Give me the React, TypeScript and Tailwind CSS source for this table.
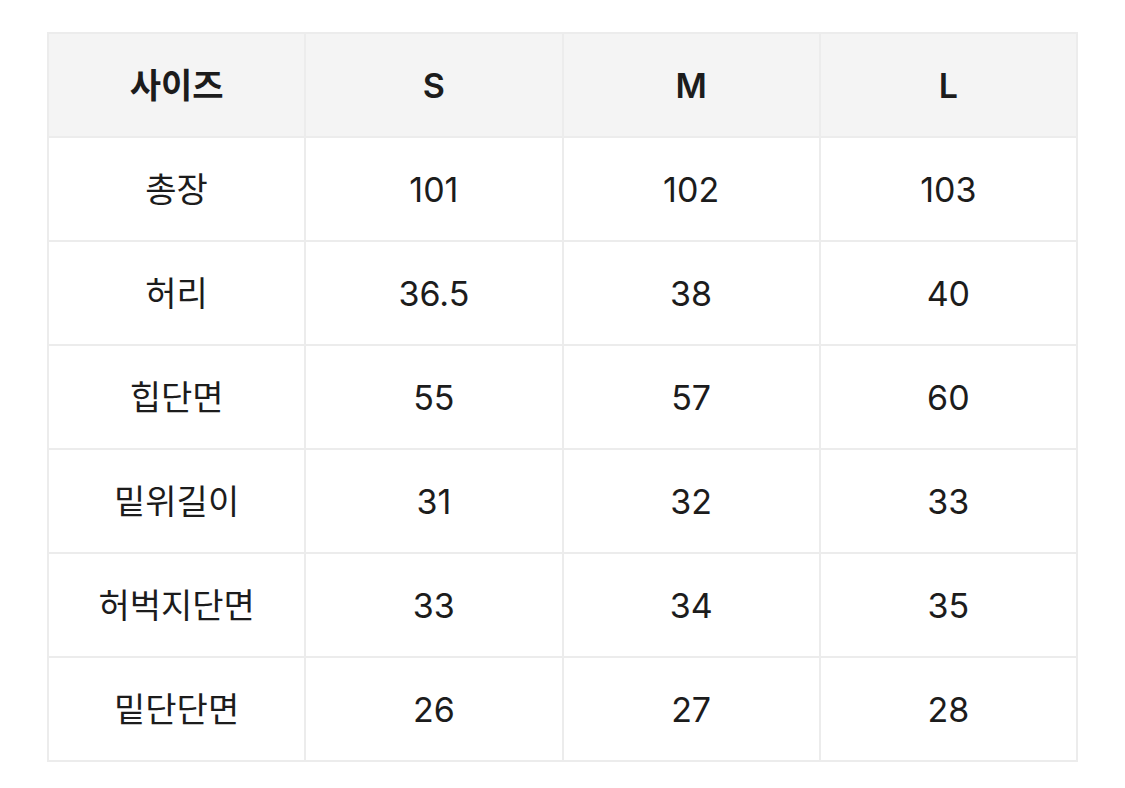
import React from 'react';

const head = ['사이즈', 'S', 'M', 'L'];

const rows = [
  ['총장', '101', '102', '103'],
  ['허리', '36.5', '38', '40'],
  ['힙단면', '55', '57', '60'],
  ['밑위길이', '31', '32', '33'],
  ['허벅지단면', '33', '34', '35'],
  ['밑단단면', '26', '27', '28'],
];

export default function App() {
  return (
    <div className="min-h-screen bg-white pt-[32px] pl-[47px] font-['Inter','Noto_Sans_CJK_KR',sans-serif] text-[#1c1c1c]">
      <table className="w-[1031px] table-fixed border-collapse border-2 border-[#ececec]">
        <thead>
          <tr className="h-[104px] bg-[#f4f4f4]">
            {head.map((h) => (
              <th key={h} className="border-2 border-[#ececec] text-[34px] font-semibold">
                {h}
              </th>
            ))}
          </tr>
        </thead>
        <tbody>
          {rows.map((row) => (
            <tr key={row[0]} className="h-[104px]">
              {row.map((cell, i) => (
                <td key={i} className="border-2 border-[#ececec] text-center text-[34px] font-normal">
                  {cell}
                </td>
              ))}
            </tr>
          ))}
        </tbody>
      </table>
    </div>
  );
}
